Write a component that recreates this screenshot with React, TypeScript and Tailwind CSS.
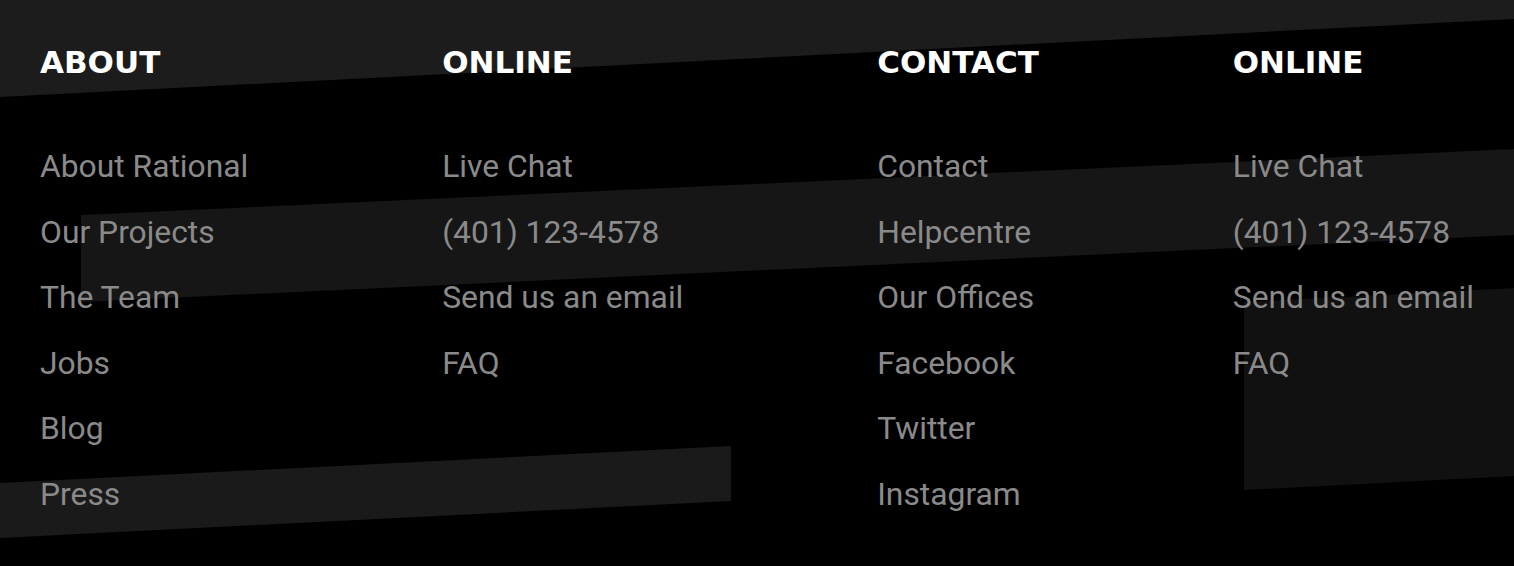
const columns = [
  {
    title: "ABOUT",
    links: ["About Rational", "Our Projects", "The Team", "Jobs", "Blog", "Press"],
  },
  {
    title: "ONLINE",
    links: ["Live Chat", "(401) 123-4578", "Send us an email", "FAQ"],
  },
  {
    title: "CONTACT",
    links: ["Contact", "Helpcentre", "Our Offices", "Facebook", "Twitter", "Instagram"],
  },
  {
    title: "ONLINE",
    links: ["Live Chat", "(401) 123-4578", "Send us an email", "FAQ"],
  },
];

export default function App() {
  return (
    <footer className="relative h-[566px] w-full overflow-hidden bg-black">
      {/* slanted background stripes */}
      <svg
        className="absolute inset-0 h-full w-full"
        viewBox="0 0 1514 566"
        preserveAspectRatio="none"
      >
        <polygon points="0,0 1514,0 1514,19 0,97" fill="#1c1c1c" />
        <polygon points="81,215 1514,149 1514,235 81,302" fill="#161616" />
        <polygon points="0,483 731,446 731,501 0,538" fill="#1a1a1a" />
        <polygon points="1244,302 1514,288 1514,476 1244,490" fill="#111111" />
      </svg>

      <div className="relative flex justify-between px-[40px] pt-[44px]">
        {columns.map((col, i) => (
          <div key={i} className="flex flex-col">
            <h4
              className="text-[31px] leading-[36px] font-bold text-white"
              style={{ fontFamily: '"DejaVu Sans", sans-serif' }}
            >
              {col.title}
            </h4>
            <ul className="mt-[54px]">
              {col.links.map((l) => (
                <li
                  key={l}
                  className="whitespace-nowrap text-[31.8px] leading-[65.6px] text-[#8a8a8a]"
                  style={{ fontFamily: "Roboto, sans-serif" }}
                >
                  {l}
                </li>
              ))}
            </ul>
          </div>
        ))}
      </div>
    </footer>
  );
}
